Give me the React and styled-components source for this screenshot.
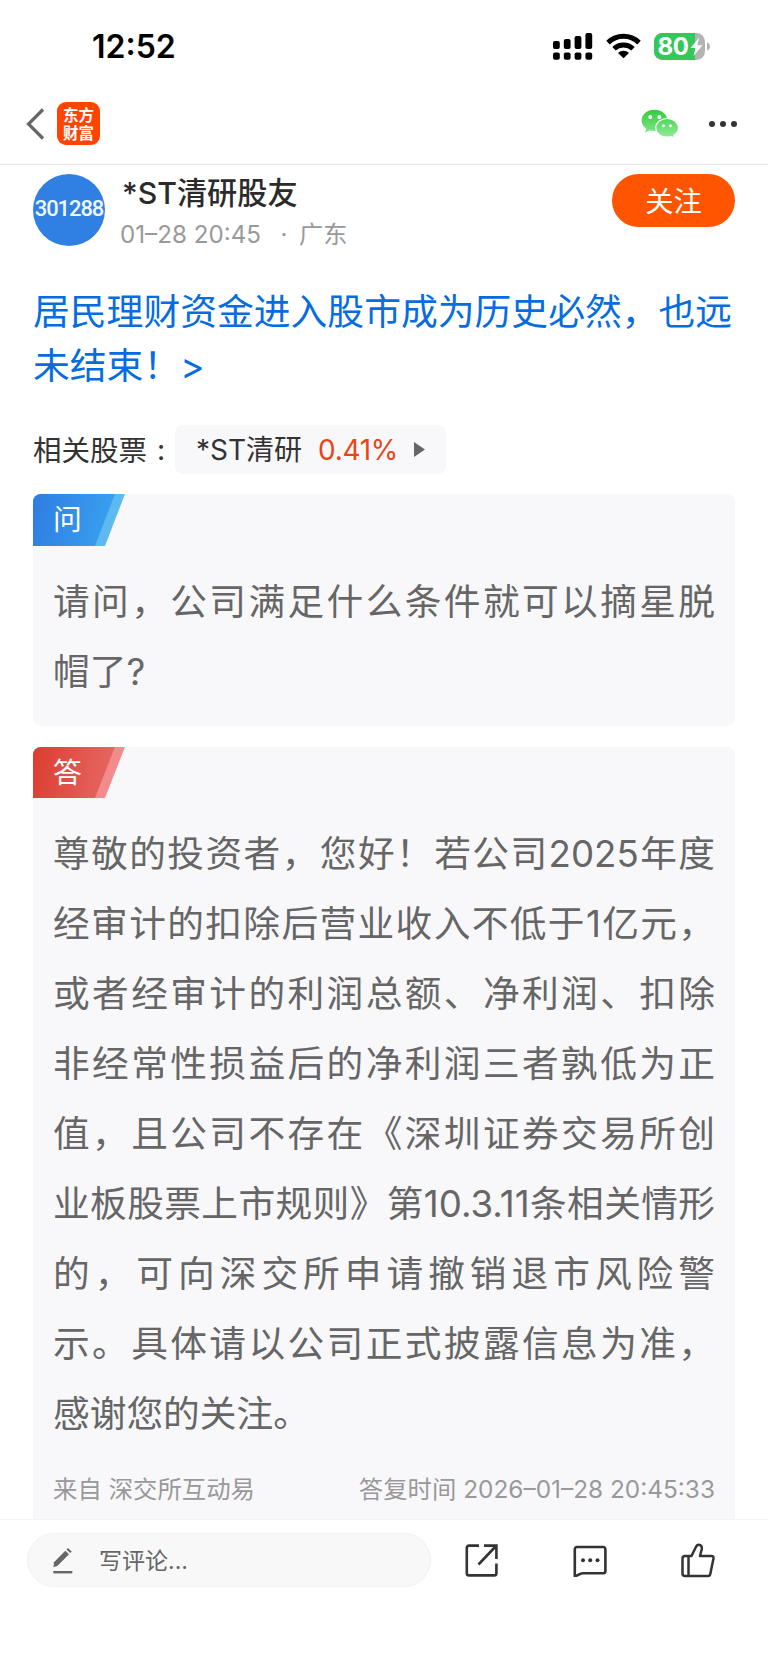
import React from 'react';
import styled, { createGlobalStyle } from 'styled-components';

const GlobalStyle = createGlobalStyle`
    * {
        box-sizing: border-box;
    }

    body {
        margin: 0;
        background: #fff;
        font-family: Inter, 'Noto Sans CJK SC', sans-serif;
        text-spacing-trim: space-all;
    }

    svg {
        display: block;
        flex: none;
    }
`;

const Page = styled.div`
    width: 768px;
    height: 1662px;
    display: flex;
    flex-direction: column;
    overflow: hidden;
    background: #fff;
`;

const StatusBar = styled.div`
    height: 92px;
    flex: none;
    display: flex;
    align-items: center;
    justify-content: space-between;
    padding: 0 57px 0 92px;
`;

const Clock = styled.div`
    font-size: 32px;
    font-weight: 600;
    line-height: 40px;
    padding-top: 2px;
    color: #000;
`;

const StatusIcons = styled.div`
    display: flex;
    align-items: center;
    gap: 13px;
`;

const Header = styled.header`
    height: 73px;
    flex: none;
    display: flex;
    align-items: center;
    padding: 0 30px 9px 26px;
    border-bottom: 1px solid #e6e6e6;
`;

const AppLogo = styled.div`
    width: 43px;
    height: 43px;
    margin: 0 auto 0 12px;
    padding-top: 3px;
    border-radius: 9px;
    background: #ff4400;
    font-family: 'Noto Sans CJK SC', sans-serif;
    font-size: 15.5px;
    font-weight: 700;
    line-height: 18px;
    text-align: center;
    color: #fff;
`;

const MoreIcon = styled.div`
    display: flex;
    gap: 5px;
    margin-left: 30px;
    padding-right: 1px;
`;

const Dot = styled.i`
    width: 6px;
    height: 6px;
    border-radius: 50%;
    background: #333;
`;

const Content = styled.main`
    height: 1354px;
    flex: none;
    overflow: hidden;
    padding: 8.5px 33px 0;
`;

const Author = styled.div`
    display: flex;
    align-items: flex-start;
    height: 73px;
`;

const Avatar = styled.div`
    width: 72px;
    height: 72px;
    border-radius: 50%;
    background: #3080e3;
    display: flex;
    align-items: center;
    justify-content: center;
    padding-bottom: 3px;
    font-family: Roboto, sans-serif;
    font-size: 22px;
    font-weight: 500;
    letter-spacing: -1.1px;
    color: #eef6ff;
`;

const AuthorInfo = styled.div`
    flex: 1;
    padding-left: 15px;
`;

const AuthorName = styled.div`
    font-size: 30.2px;
    font-weight: 500;
    line-height: 38px;
    padding-left: 2px;
    color: #2b2b2b;
`;

const AuthorMeta = styled.div`
    display: flex;
    font-size: 24.2px;
    line-height: 30px;
    margin-top: 8px;
    color: #999;
`;

const Separator = styled.span`
    width: 38px;
    padding-left: 8px;
    text-align: center;
`;

const FollowButton = styled.button`
    width: 123px;
    height: 53px;
    border: 0;
    padding: 0 0 2px;
    border-radius: 27px;
    background: #ff5500;
    font-family: inherit;
    font-size: 28.3px;
    color: #fff;
`;

const Title = styled.h1`
    margin: 38px 0 0;
    font-size: 36.8px;
    font-weight: 400;
    line-height: 54px;
    color: #056de0;
    white-space: nowrap;
`;

const Related = styled.div`
    display: flex;
    align-items: center;
    height: 49px;
    margin-top: 32.5px;
    font-size: 28.5px;
    color: #333;
`;

const RelatedLabel = styled.span`
    padding-bottom: 3px;
`;

const Colon = styled.span`
    width: 28px;
    text-align: center;
`;

const StockTag = styled.div`
    width: 271px;
    height: 49px;
    display: flex;
    align-items: center;
    padding-left: 21px;
    border-radius: 8px;
    background: #f8f8fb;
    font-size: 28px;
`;

const Change = styled.span`
    margin: 0 16px;
    color: #ea4517;
    letter-spacing: -0.3px;
`;

const Card = styled.section`
    height: ${props => props.$height}px;
    margin-top: ${props => props.$gap}px;
    border-radius: 8px;
    background: #f8f8fb;
    overflow: hidden;
`;

const Badge = styled.div`
    position: relative;
    isolation: isolate;
    width: 92px;
    height: ${props => props.$height}px;
    padding-left: 20px;
    font-size: 28.8px;
    line-height: 51px;
    color: #fff;
    background: ${props => props.$strip};
    clip-path: polygon(0 0, 100% 0, 72px 100%, 0 100%);

    &::before {
        content: '';
        position: absolute;
        inset: 0;
        z-index: -1;
        background: linear-gradient(100deg, ${props => props.$from}, ${props => props.$to});
        clip-path: polygon(0 0, 82px 0, 62px 100%, 0 100%);
    }
`;

const Lines = styled.div`
    padding: 21px 20px 0;
    font-size: 36.7px;
    line-height: 70px;
    color: #666;
`;

const Line = styled.p`
    margin: 0;
    height: 70px;
    white-space: nowrap;
    text-align-last: ${props => (props.$last ? 'left' : 'justify')};
`;

const Source = styled.div`
    display: flex;
    justify-content: space-between;
    padding: 20px 20px 0;
    font-size: 24.4px;
    line-height: 40px;
    color: #999;
`;

const BottomBar = styled.footer`
    flex: 1;
    display: flex;
    align-items: flex-start;
    padding: 13px 53px 0 27px;
    border-top: 1px solid #f3f3f3;
    background: #fff;
`;

const CommentInput = styled.div`
    width: 404px;
    height: 54px;
    display: flex;
    align-items: center;
    gap: 26px;
    padding-left: 25px;
    border: 1px solid #f2f2f2;
    border-radius: 27px;
    background: #f8f8f8;
    font-size: 23px;
    color: #666;
`;

const Placeholder = styled.span`
    padding-bottom: 3px;
`;

const Actions = styled.div`
    flex: 1;
    height: 54px;
    display: flex;
    align-items: center;
    justify-content: space-between;
    padding-left: 34px;
`;

function SignalIcon() {
    const bars = [
        [0, 8, 8],
        [10.8, 6, 10],
        [21.6, 3, 13],
        [32.4, 0, 16],
    ];
    return (
        <svg width="40" height="27" viewBox="0 0 40 27">
            {bars.map(([x, y, h]) => (
                <g key={x}>
                    <rect x={x} y={y} width="6.8" height={h} rx="2" />
                    <rect x={x} y="19.6" width="6.8" height="7.2" rx="2" />
                </g>
            ))}
        </svg>
    );
}

function WifiIcon() {
    return (
        <svg width="35" height="26" viewBox="0 0 35 26">
            <g fill="none" stroke="#000" strokeWidth="5">
                <path d="M2 9.6a22.3 22.3 0 0 1 31 0" />
                <path d="M8 15.8a13.8 13.8 0 0 1 19 0" />
            </g>
            <path d="M17.5 25.3 12 19.9a8 8 0 0 1 11 0z" />
        </svg>
    );
}

function BatteryIcon() {
    return (
        <svg width="57" height="27" viewBox="0 0 57 27">
            <defs>
                <clipPath id="battery">
                    <rect width="51" height="27" rx="8.5" />
                </clipPath>
            </defs>
            <g clipPath="url(#battery)">
                <rect width="51" height="27" fill="#b3b3b3" />
                <rect width="41" height="27" fill="#34c759" />
            </g>
            <path d="M53 9.5c4 1 4 7 0 8z" fill="#b3b3b3" />
            <text x="3.6" y="22.2" fontFamily="Inter, sans-serif" fontSize="24" fontWeight="700" letterSpacing="-.4" fill="#fff">
                80
            </text>
            <path d="M45.2 4.5 36.5 15h5l-2 8 9-10.8h-5.2z" fill="#fff" />
        </svg>
    );
}

function BackIcon() {
    return (
        <svg width="19" height="32" viewBox="0 0 19 32" fill="none" stroke="#666" strokeWidth="3.2">
            <path d="M17 1.5 2.5 16 17 30.5" />
        </svg>
    );
}

function WechatIcon() {
    return (
        <svg width="38" height="30" viewBox="0 0 38 30">
            <defs>
                <linearGradient id="wechat" x1="0" y1="0" x2="0" y2="30" gradientUnits="userSpaceOnUse">
                    <stop offset="0" stopColor="#2fcb3c" />
                    <stop offset="1" stopColor="#98ec9c" />
                </linearGradient>
            </defs>
            <path
                fill="url(#wechat)"
                d="M13.5.8C6.2.8.6 5.5.6 11.5c0 3.4 1.8 6.2 4.7 8.2l-1.2 3.8 4.5-2.3c1.6.5 3.2.8 4.9.8 7.2 0 13-4.6 13-10.500S20.700.8 13.500.8z"
            />
            <path
                fill="url(#wechat)"
                stroke="#fff"
                strokeWidth="1.1"
                d="M26 9.500c-6.200 0-11.300 4.100-11.300 9.300S19.800 28 26 28c1.400 0 2.800-.2 4-.6l3.700 2-.9-3.200c2.800-1.700 4.600-4.300 4.600-7.400 0-5.200-5.100-9.300-11.400-9.300z"
            />
            <g fill="#fff">
                <circle cx="9.2" cy="8" r="2" />
                <circle cx="18.2" cy="8" r="2" />
                <circle cx="22.4" cy="16.8" r="1.5" />
                <circle cx="29.4" cy="16.8" r="1.5" />
            </g>
        </svg>
    );
}

function PlayIcon() {
    return (
        <svg width="11" height="15" viewBox="0 0 11 15">
            <path d="M0 0v15l11-7.500z" fill="#666" />
        </svg>
    );
}

function PencilIcon() {
    return (
        <svg width="20" height="27" viewBox="0 0 20 27" fill="#666">
            <path d="M12.3 3.7 16 7.2 4.5 18.8.5 20.3 1 15.3z" />
            <path d="m13.500 2.500 1.400-1.600 3.800 3.500-1.500 1.600z" />
            <rect x="0.3" y="24" width="19" height="2.4" />
        </svg>
    );
}

function ShareIcon() {
    return (
        <svg width="33" height="33" viewBox="0 0 33 33" fill="none" stroke="#333" strokeWidth="2.6">
            <path d="M14 1.6H4a2.200 2.200 0 0 0-2.200 2.200v25.400a2.200 2.200 0 0 0 2.200 2.200h25.200a2.200 2.200 0 0 0 2.200-2.200V19.500" />
            <path d="M19 1.6h12.400V15M31 2 13.500 20.500" />
        </svg>
    );
}

function MessageIcon() {
    return (
        <svg width="34" height="33" viewBox="0 0 34 33">
            <path
                d="M4 3h26.200a2.200 2.200 0 0 1 2.200 2.200V27a2.200 2.200 0 0 1-2.200 2.200H10c-3 0-4 2.300-8.200 3V5.200A2.200 2.200 0 0 1 4 3z"
                fill="none"
                stroke="#333"
                strokeWidth="2.6"
                strokeLinejoin="round"
            />
            <g fill="#333">
                <circle cx="10" cy="16.3" r="2" />
                <circle cx="17.2" cy="16.3" r="2" />
                <circle cx="24.5" cy="16.3" r="2" />
            </g>
        </svg>
    );
}

function LikeIcon() {
    return (
        <svg width="34" height="35" viewBox="0 0 34 35" fill="none" stroke="#333" strokeWidth="2.5" strokeLinejoin="round">
            <path d="M10.500 13 14.800 4.300c.6-1.600 1.500-2.600 3-2.600 2.300 0 3.300 2 3 4.300L19 13h11.500c1.500 0 2.200 1 2 2.300L29.300 31c-.2 1.200-1 2-2.200 2H4a2.500 2.500 0 0 1-2.500-2.500v-15A2.500 2.500 0 0 1 4 13h6.500z" />
            <path d="M7.500 13v20" />
        </svg>
    );
}

const question = ['请问，公司满足什么条件就可以摘星脱', '帽了?'];

const answer = [
    '尊敬的投资者，您好！若公司2025年度',
    '经审计的扣除后营业收入不低于1亿元，',
    '或者经审计的利润总额、净利润、扣除',
    '非经常性损益后的净利润三者孰低为正',
    '值，且公司不存在《深圳证券交易所创',
    '业板股票上市规则》第10.3.11条相关情形',
    '的，可向深交所申请撤销退市风险警',
    '示。具体请以公司正式披露信息为准，',
    '感谢您的关注。',
];

function TextLines({ lines }) {
    return (
        <Lines>
            {lines.map((line, index) => (
                <Line key={line} $last={index === lines.length - 1}>
                    {line}
                </Line>
            ))}
        </Lines>
    );
}

function App() {
    return (
        <Page>
            <GlobalStyle />
            <StatusBar>
                <Clock>12:52</Clock>
                <StatusIcons>
                    <SignalIcon />
                    <WifiIcon />
                    <BatteryIcon />
                </StatusIcons>
            </StatusBar>
            <Header>
                <BackIcon />
                <AppLogo>
                    东方
                    <br />
                    财富
                </AppLogo>
                <WechatIcon />
                <MoreIcon>
                    <Dot />
                    <Dot />
                    <Dot />
                </MoreIcon>
            </Header>
            <Content>
                <Author>
                    <Avatar>301288</Avatar>
                    <AuthorInfo>
                        <AuthorName>*ST清研股友</AuthorName>
                        <AuthorMeta>
                            <span>01–28 20:45</span>
                            <Separator>·</Separator>
                            <span>广东</span>
                        </AuthorMeta>
                    </AuthorInfo>
                    <FollowButton>关注</FollowButton>
                </Author>
                <Title>
                    居民理财资金进入股市成为历史必然，也远
                    <br />
                    未结束！&gt;
                </Title>
                <Related>
                    <RelatedLabel>相关股票</RelatedLabel>
                    <Colon>:</Colon>
                    <StockTag>
                        <RelatedLabel>*ST清研</RelatedLabel>
                        <Change>0.41%</Change>
                        <PlayIcon />
                    </StockTag>
                </Related>
                <Card $height={232} $gap={20}>
                    <Badge $height={52} $from="#2f7de1" $to="#3ba7f2" $strip="#5dbaf1">
                        问
                    </Badge>
                    <TextLines lines={question} />
                </Card>
                <Card $height={790} $gap={21}>
                    <Badge $height={51} $from="#dc3c30" $to="#e8706c" $strip="#f28b8c">
                        答
                    </Badge>
                    <TextLines lines={answer} />
                    <Source>
                        <span>来自 深交所互动易</span>
                        <span>答复时间 2026–01–28 20:45:33</span>
                    </Source>
                </Card>
            </Content>
            <BottomBar>
                <CommentInput>
                    <PencilIcon />
                    <Placeholder>写评论...</Placeholder>
                </CommentInput>
                <Actions>
                    <ShareIcon />
                    <MessageIcon />
                    <LikeIcon />
                </Actions>
            </BottomBar>
        </Page>
    );
}

export default App;
